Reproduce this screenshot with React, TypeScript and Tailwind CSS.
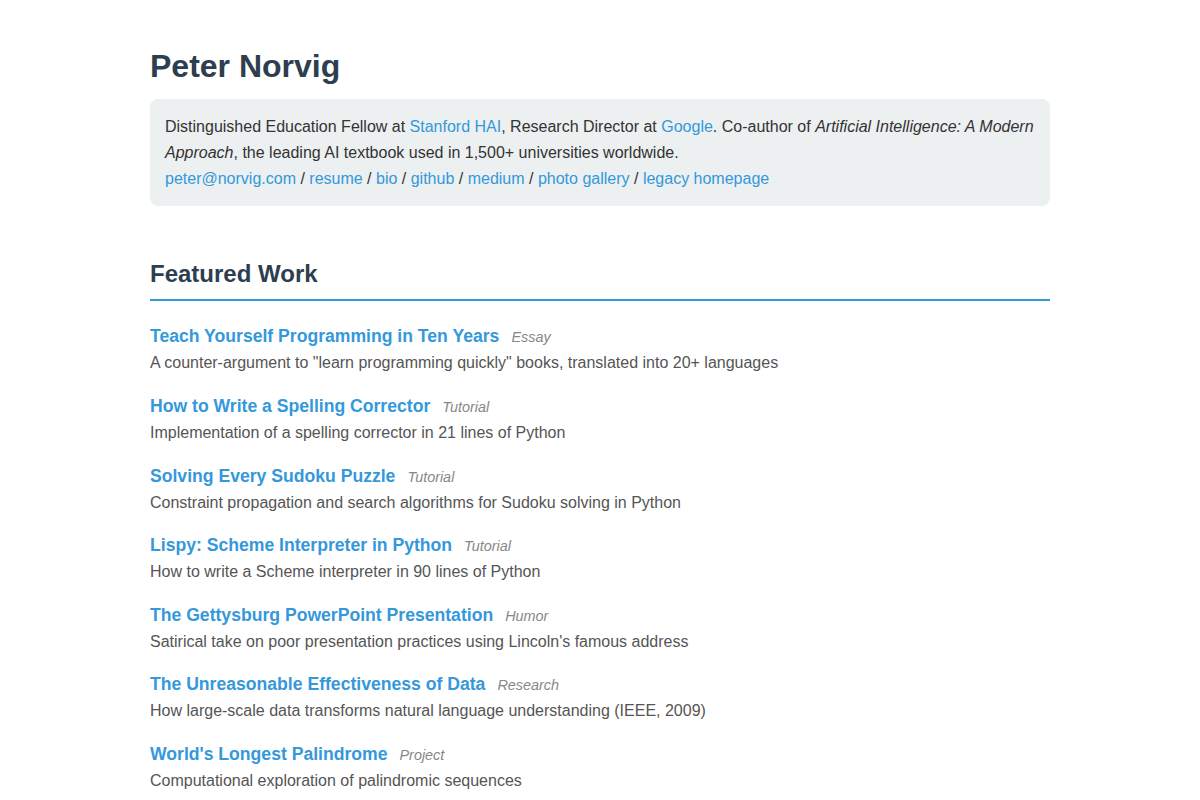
import React from "react";

const works = [
  { title: "Teach Yourself Programming in Ten Years", tag: "Essay", desc: 'A counter-argument to "learn programming quickly" books, translated into 20+ languages' },
  { title: "How to Write a Spelling Corrector", tag: "Tutorial", desc: "Implementation of a spelling corrector in 21 lines of Python" },
  { title: "Solving Every Sudoku Puzzle", tag: "Tutorial", desc: "Constraint propagation and search algorithms for Sudoku solving in Python" },
  { title: "Lispy: Scheme Interpreter in Python", tag: "Tutorial", desc: "How to write a Scheme interpreter in 90 lines of Python" },
  { title: "The Gettysburg PowerPoint Presentation", tag: "Humor", desc: "Satirical take on poor presentation practices using Lincoln's famous address" },
  { title: "The Unreasonable Effectiveness of Data", tag: "Research", desc: "How large-scale data transforms natural language understanding (IEEE, 2009)" },
  { title: "World's Longest Palindrome", tag: "Project", desc: "Computational exploration of palindromic sequences" },
  { title: "Paradigms of AI Programming", tag: "Book", desc: "Case studies in Common Lisp, now freely available online" },
];

const A = ({ children }: { children: React.ReactNode }) => (
  <a href="#" className="text-[#3498db] no-underline">{children}</a>
);

export default function App() {
  return (
    <div className="min-h-screen bg-white font-['Liberation_Sans',Arial,sans-serif] text-[16px] leading-[1.6] text-[#333]">
      <div className="mx-auto max-w-[900px] pt-[47px] pb-10">
        <h1 className="m-0 mb-[14px] text-[32px] font-bold leading-[1.2] text-[#2c3e50]">Peter Norvig</h1>
        <div className="rounded-[8px] bg-[#ecf0f1] p-[15px]">
          <div>
            Distinguished Education Fellow at <A>Stanford HAI</A>, Research Director at <A>Google</A>. Co-author of{" "}
            <em>Artificial Intelligence: A Modern Approach</em>, the leading AI textbook used in 1,500+ universities worldwide.
          </div>
          <div>
            <A>peter@norvig.com</A> / <A>resume</A> / <A>bio</A> / <A>github</A> / <A>medium</A> / <A>photo gallery</A> /{" "}
            <A>legacy homepage</A>
          </div>
        </div>

        <h2 className="mt-[52px] mb-[22px] border-b-2 border-[#3498db] pb-[10px] text-[24px] font-bold leading-[1.3] text-[#2c3e50]">
          Featured Work
        </h2>
        <div className="flex flex-col gap-[17px]">
          {works.map((w) => (
            <div key={w.title}>
              <div className="leading-[26px]">
                <a href="#" className="text-[17.6px] font-bold text-[#3498db]">{w.title}</a>
                <span className="ml-[12px] text-[14.4px] italic text-[#888]">{w.tag}</span>
              </div>
              <div className="text-[#555]">{w.desc}</div>
            </div>
          ))}
        </div>
      </div>
    </div>
  );
}
